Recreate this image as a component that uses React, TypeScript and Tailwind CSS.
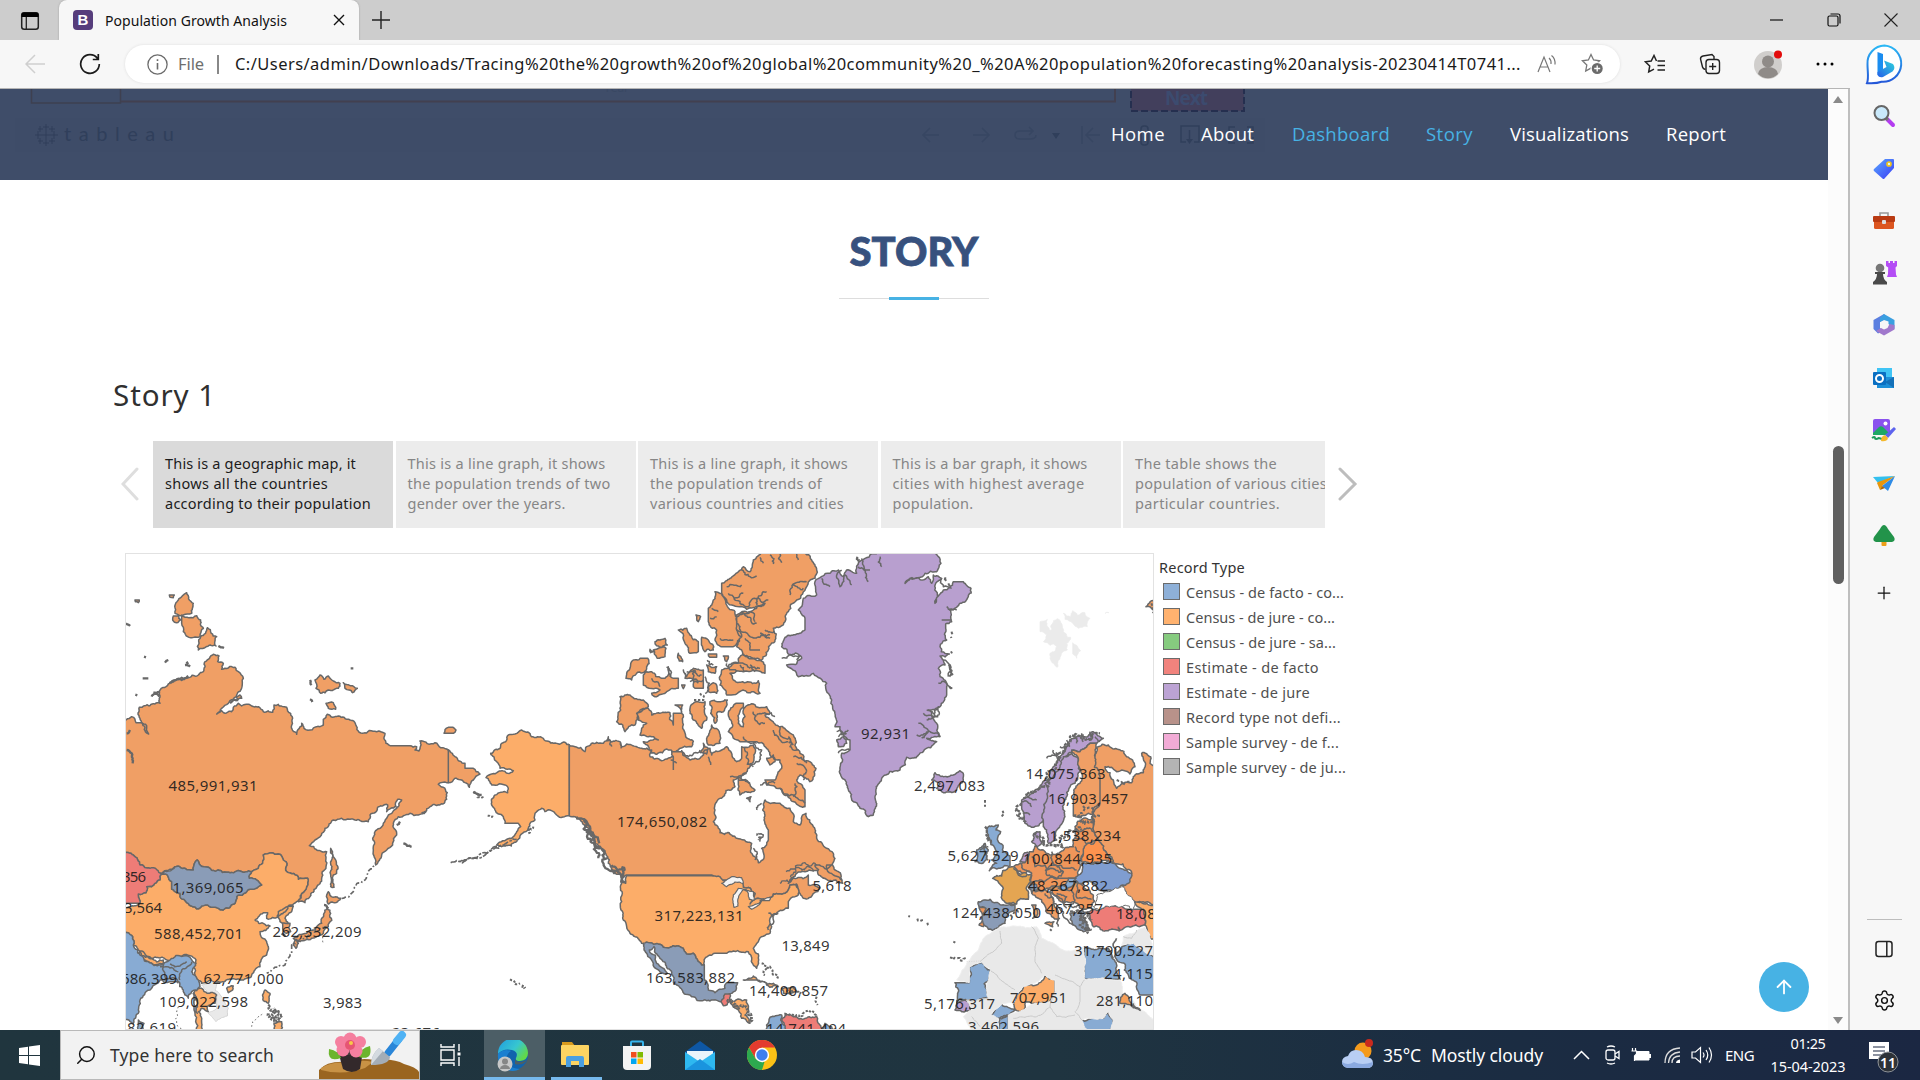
import React, { useLayoutEffect, useRef, useState } from "react";
import { Search, ArrowUp, Plus, Settings } from "lucide-react";

/* Text set to a given width by spreading its letters. */
function Fit({ w, className = "", children }: { w: number; className?: string; children: string }) {
  const ref = useRef<HTMLSpanElement>(null);
  const [ls, setLs] = useState(0);
  useLayoutEffect(() => {
    const el = ref.current;
    if (!el) return;
    el.style.letterSpacing = "0px";
    setLs((w - el.getBoundingClientRect().width) / children.length);
  }, [w, children]);
  return (
    <span ref={ref} style={{ letterSpacing: `${ls}px` }} className={"inline-block whitespace-nowrap " + className}>
      {children}
    </span>
  );
}

/* ---------- map geometry ---------- */
type P = [number, number];
const hash = (a: P, b: P) => {
  const v = Math.sin(a[0] * 12.9898 + a[1] * 78.233 + b[0] * 37.719 + b[1] * 4.581) * 43758.5453;
  return v - Math.floor(v);
};
function split(a: P, b: P, rough: number): P[] {
  const dx = b[0] - a[0];
  const dy = b[1] - a[1];
  const len = Math.hypot(dx, dy);
  if (len < 7 || dx === 0 || dy === 0) return [a];
  const flip = a[0] > b[0];
  const [p, q] = flip ? [b, a] : [a, b];
  const off = (hash(p, q) - 0.5) * rough;
  const m: P = [(p[0] + q[0]) / 2 - (q[1] - p[1]) * off, (p[1] + q[1]) / 2 + (q[0] - p[0]) * off];
  return [...split(a, m, rough), ...split(m, b, rough)];
}
function coast(points: string, rough: number, close = true) {
  const pts = points.trim().split(/\s+/).map((s) => s.split(",").map(Number) as P);
  const out: P[] = [];
  pts.forEach((p, i) => {
    if (i < pts.length - 1) out.push(...split(p, pts[i + 1], rough));
    else out.push(...(close ? split(p, pts[0], rough) : [p]));
  });
  return "M" + out.map((p) => p[0].toFixed(1) + " " + p[1].toFixed(1)).join("L") + (close ? "Z" : "");
}
function Land({ f, d, r = 0.4, w = 4.5, s = "#686868" }: { f: string; d: string[]; r?: number; w?: number; s?: string }) {
  return <path d={d.map((x) => coast(x, r)).join("")} fill={f} stroke={s} strokeWidth={w} strokeLinejoin="round" />;
}
function Lines({ d, w = 4.5, s = "#686868", r = 0.4, dash }: { d: string[]; w?: number; s?: string; r?: number; dash?: string }) {
  return <path d={d.map((x) => coast(x, r, false)).join("")} fill="none" stroke={s} strokeWidth={w} strokeDasharray={dash} strokeLinejoin="round" />;
}

const O = "#f09f65";
const LO = "#fcad69";
const BL = "#88abd3";
const SL = "#8a9cb7";
const RD = "#ee7c77";
const PU = "#b89fcf";
const GR = "#e9e9e9";

const labels: [string, number, number, number][] = [
  ["485,991,931", 168.5, 791, 89], ["1,369,065", 172.5, 893, 71], ["356", 122, 882, 24], ["3,564", 124, 913, 38],
  ["588,452,701", 154, 939, 89], ["262,332,209", 272.5, 937, 89], ["686,399", 121, 984, 56], ["62,771,000", 203.5, 984, 80],
  ["109,022,598", 159, 1007, 89], ["3,983", 323, 1008, 39], ["82,619", 127, 1033, 49], ["23,676", 392, 1038, 48],
  ["174,650,082", 617, 827, 90], ["317,223,131", 654.5, 921, 89], ["5,618", 812.5, 891, 39], ["13,849", 781.5, 951, 48],
  ["163,583,882", 646, 983, 89], ["14,400,857", 749, 996, 79], ["14,741,494", 766, 1034, 80], ["92,931", 861, 739, 49],
  ["2,497,083", 914, 791, 71], ["14,075,363", 1025.5, 779, 80], ["16,903,457", 1048, 804, 80], ["1,538,234", 1049.5, 841, 71],
  ["5,627,529", 947.5, 861, 71], ["100,844,935", 1023, 864, 89], ["48,267,882", 1028, 891, 80], ["124,438,050", 952, 918, 89],
  ["467,257", 1046, 914, 57], ["18,086,215", 1116, 919, 80], ["31,790,527", 1074, 956, 79], ["24,115,338", 1104, 979, 80],
  ["281,110", 1096, 1006, 57], ["707,951", 1010, 1003, 57], ["5,176,317", 924, 1009, 71], ["3,462,596", 968, 1032, 71],
];

function WorldMap() {
  return (
    <svg width="1029" height="477" viewBox="125 553 1029 477" className="block">
      <g transform="translate(120 550) scale(.33333)">
        <Land f={O} d={[
          "0,500 18,510 35,500 48,518 62,518 80,527 86,552 76,545 68,520 60,505 58,472 90,467 120,460 118,430 145,402 200,385 235,375 250,365 255,335 280,313 297,318 293,335 310,340 305,358 345,352 355,365 370,385 366,410 350,435 325,460 305,475 290,492 305,482 335,485 340,472 355,460 365,468 385,463 415,470 430,485 458,487 462,465 475,463 500,472 512,490 514,530 530,553 538,535 545,520 552,535 600,530 610,525 610,508 622,493 655,498 690,510 705,518 728,550 770,545 795,550 798,580 815,587 870,587 890,590 885,600 897,603 900,573 945,578 985,600 1035,640 1035,655 1060,655 1080,672 1060,690 1048,712 1035,698 1005,685 985,698 955,703 970,712 980,748 930,770 895,795 870,790 850,797 835,800 820,820 830,850 818,885 800,900 785,915 767,945 760,900 758,865 770,840 800,805 830,775 845,750 833,748 828,770 800,785 803,765 775,770 750,795 745,815 720,812 690,808 640,810 615,835 585,870 568,887 590,900 620,905 618,950 605,985 570,1040 555,1058 535,1055 545,1030 560,1010 563,985 535,988 500,965 490,930 475,912 455,908 430,915 428,940 415,955 395,965 360,963 320,967 270,955 232,930 222,945 220,960 195,955 165,950 125,970 90,955 60,945 40,915 0,880",
          "200,128 220,160 215,190 190,195 165,190 175,150", "185,195 230,197 242,210 240,260 222,262 190,245 185,220", "160,198 175,198 182,210 170,218 158,210",
          "262,233 290,260 288,288 235,300 242,260", "585,390 600,375 612,388 625,378 660,400 655,415 625,420 602,430 588,415", "670,398 712,415 698,428 675,415",
          "618,460 640,458 647,478 625,475", "972,550 985,532 1008,540 1000,550", "348,440 360,435 365,445 352,450", "45,150 58,150 55,158 46,155", "148,135 163,135 160,143 150,142",
          "632,895 640,920 650,970 640,975 642,1012 632,1010 636,950", "625,1025 662,1045 655,1052 625,1062 622,1045",
          "622,1075 632,1090 625,1130 610,1150 575,1165 540,1175 520,1165 560,1150 605,1120 612,1090", "525,1170 535,1180 528,1195 520,1185", "485,1115 510,1120 512,1145 500,1150 488,1135",
        ]} />
        <Land f={LO} d={[
          "125,972 155,995 155,1018 180,1030 200,1058 285,1072 345,1060 350,1040 380,1025 425,1005 388,985 395,965 415,955 428,940 430,915 455,908 475,912 490,930 500,965 535,988 563,985 560,1010 545,1030 530,1055 500,1080 475,1100 440,1105 443,1088 430,1088 405,1110 430,1120 450,1128 420,1145 440,1175 445,1190 440,1215 420,1250 395,1275 360,1290 300,1297 270,1290 245,1300 225,1275 228,1230 210,1217 190,1215 150,1232 100,1225 60,1205 40,1185 38,1160 0,1140 0,1078 58,1060 55,1032 78,1028 80,1010 105,1000",
          "60,1203 130,1230 130,1242 90,1238 55,1215", "320,1315 340,1308 335,1322 325,1328", "475,1085 520,1068 515,1085 495,1105 505,1120 480,1115",
          "435,1320 450,1330 445,1360 430,1352", "462,1420 485,1415 480,1450 455,1450",
        ]} />
        <Land f={GR} s="#d5d5d5" w={3} r={0.2} d={["245,1305 272,1294 292,1300 285,1320 325,1375 322,1398 288,1415 265,1390 290,1375 290,1335 262,1325"]} />
        <Land f={LO} d={["225,1310 245,1315 262,1330 290,1335 285,1360 262,1370 265,1385 245,1375 235,1385 245,1420 250,1450 230,1440 225,1390 230,1350"]} />
        <Land f={SL} d={["125,972 165,950 195,955 220,960 222,945 232,930 270,955 320,967 360,963 395,965 388,985 425,1005 380,1025 350,1040 345,1060 285,1072 200,1058 180,1030 155,1018 155,995"]} />
        <Land f={RD} d={["0,880 40,915 60,945 90,955 125,972 105,1000 80,1010 78,1028 55,1032 58,1060 0,1060"]} />
        <Land f={BL} d={[
          "0,1140 38,1160 40,1185 60,1215 95,1240 130,1245 150,1230 190,1218 210,1222 228,1240 215,1265 235,1290 240,1310 215,1325 205,1345 190,1320 175,1295 150,1295 120,1290 90,1320 60,1350 55,1390 40,1420 0,1400",
          "222,1330 228,1340 232,1390 222,1380", "55,1410 72,1420 68,1440 52,1440",
        ]} />
        <Lines d={["130,1245 135,1290 165,1285 175,1300", "150,1242 180,1248 200,1235", "180,1290 185,1260 215,1235", "985,598 985,700", "120,1250 160,1255 175,1265"]} />
        <Lines w={7} d={["95,440 120,425", "100,428 118,440", "150,400 205,378", "195,345 210,350", "570,390 575,405", "295,288 312,294", "18,220 30,228", "68,385 85,385", "135,338 145,330", "850,880 875,890", "1060,725 1085,735", "830,825 840,815", "905,790 918,785", "330,460 355,450", "20,600 35,610 38,640", "30,540 20,550", "485,1150 495,1160", "612,1065 625,1075", "692,355 700,355", "72,320 78,322", "46,434 52,436", "570,448 577,456", "200,335 205,342"]} />
        <Lines w={5} dash="14 7 5 6" d={["665,1045 700,1025 735,990 765,945", "620,1130 560,1165 515,1185 515,1210 495,1245 440,1270"]} />
        <Lines w={5} dash="20 5 8 4" d={["992,938 1060,925 1100,910 1145,885 1180,865"]} />
        <Lines w={9} dash="6 3" r={0.9} d={["450,1365 475,1385 480,1410 455,1400 460,1375", "445,1390 475,1400"]} />
        <Lines w={3} dash="5 7" d={["175,1370 170,1420 185,1440", "395,1430 430,1390", "608,1160 610,1180"]} />
      </g>

      <g transform="translate(460 550) scale(.33333)">
        <Land f={LO} d={["328,585 315,577 250,565 215,560 185,540 165,552 145,555 125,580 120,595 92,610 110,635 120,655 143,658 160,662 143,670 115,665 78,683 95,705 140,707 143,728 105,735 95,765 105,780 130,800 135,820 175,820 182,830 170,845 150,865 110,885 125,890 175,868 205,835 225,810 230,785 245,775 255,785 270,780 290,795 328,797"]} />
        <Land f={O} d={[
          "328,585 345,590 375,605 380,590 410,577 430,580 445,560 452,575 482,578 485,590 500,582 545,595 575,600 570,620 600,630 640,620 635,605 665,605 690,630 720,625 735,600 750,595 755,615 785,600 800,590 815,610 830,635 845,625 845,590 880,585 885,610 870,650 850,675 820,690 825,710 780,745 765,780 760,815 780,848 830,865 875,880 878,915 895,938 908,930 905,895 925,870 925,840 912,810 908,780 915,750 960,760 990,775 1000,815 1020,825 1038,790 1060,830 1070,865 1100,895 1120,910 1118,940 1060,962 1010,970 985,1000 1010,985 1045,975 1045,1005 1080,1012 1060,1030 1030,1045 1020,1030 1010,1003 990,1005 975,1030 940,1032 905,1048 870,1062 880,1050 885,1030 850,1012 845,990 790,990 755,975 500,975 485,985 460,965 445,940 430,905 400,870 375,830 345,800 328,797",
          "785,100 810,85 835,65 850,50 870,65 880,30 905,5 1020,5 1055,30 1070,60 1065,85 1040,110 1010,150 985,185 975,215 940,235 945,270 925,300 905,330 870,320 850,315 830,290 845,260 830,230 830,195 880,180 915,160 860,178 815,165 800,150 785,130",
          "765,125 785,130 800,165 825,185 830,220 840,230 845,260 820,290 785,290 765,270 770,240 745,215 745,175 760,150",
          "785,360 805,355 850,312 915,345 915,370 850,365 810,370 820,390 895,392 900,430 800,435 780,405", "740,345 770,350 765,370 745,365", "750,405 765,400 770,430 745,425",
          "550,375 575,365 605,385 615,385 625,350 640,385 655,385 655,415 620,425 590,440 575,430 600,420 550,405", "670,360 680,380 700,355 730,360 730,415 705,415 700,390 675,385",
          "500,370 540,325 563,325 560,355 530,370 515,390 498,385", "585,275 615,265 622,285 590,287", "580,300 618,295 615,320 592,325", "655,240 680,235 690,255 715,275 715,305 690,310 675,280",
          "725,262 745,270 760,300 735,305", "745,312 770,312 770,322 750,322", "790,318 805,318 800,335", "655,310 668,335 658,333", "708,195 722,200 715,215", "570,298 580,305 572,308", "665,405 675,405 670,416",
          "480,440 510,435 550,450 565,470 530,490 525,525 495,545 470,515 482,480",
          "530,490 565,475 575,495 630,488 640,525 640,490 665,490 668,535 700,575 695,590 655,600 590,613 550,575 595,570 580,560 540,555 545,535 560,520 535,510", "645,465 668,465 665,488",
          "690,490 700,460 735,455 740,510 725,535 700,510", "750,455 802,450 790,485 770,490 765,520 752,490", "755,525 775,540 780,580 745,585 742,560",
          "810,480 830,460 850,460 838,490 835,520 850,530 855,500 850,480 880,462 920,470 930,490 915,495 960,530 985,545 1015,600 1035,635 1068,655 1050,695 1020,675 1010,690 1035,720 1035,770 990,745 960,715 920,705 915,690 945,690 965,655 960,630 930,615 915,590 890,575 840,575 805,545 815,515",
          "835,680 850,690 885,720 855,725 840,735 835,705", "920,625 940,615 945,635 930,645", "860,745 873,740 870,755", "1100,945 1118,945 1125,960 1143,975 1145,992 1110,990 1090,985",
          "730,580 745,595 740,612 722,608",
        ]} />
        <Land f={LO} d={[
          "500,977 755,977 790,992 845,992 850,1012 885,1030 880,1050 870,1062 905,1048 940,1032 975,1030 990,1005 1010,1003 1015,1035 1005,1040 985,1055 985,1075 955,1085 930,1105 935,1130 930,1150 895,1175 880,1195 895,1235 890,1255 875,1230 865,1205 845,1207 820,1203 800,1210 765,1210 735,1225 733,1245 725,1245 700,1210 680,1212 650,1188 610,1192 570,1178 545,1180 525,1160 510,1150 490,1110 483,1080 487,1030 483,990 497,1000",
          "810,1355 860,1350 865,1375 855,1395 870,1420 845,1405 835,1380", "850,1290 880,1278 940,1300 955,1310 930,1312 890,1290", "965,1315 1000,1312 1010,1325 970,1330",
        ]} />
        <Land f="#f4f4f4" w={3.5} r={0.2} d={["785,1000 815,980 845,983 850,1000 825,996 800,1010", "822,1072 820,1035 835,1015 852,1018 838,1035 834,1068", "850,1018 880,1025 883,1050 868,1048 865,1030", "865,1070 905,1053 895,1066 875,1078", "900,1052 932,1042 928,1052"]} />
        <Land f={SL} d={["550,1180 570,1178 610,1192 650,1188 680,1212 700,1210 725,1245 733,1245 733,1290 745,1320 765,1328 795,1315 800,1298 833,1298 828,1320 800,1335 785,1355 760,1350 740,1352 690,1335 650,1305 640,1280 600,1225 582,1190 568,1200 590,1240 622,1270 605,1268 580,1240 560,1210"]} />
        <Land f={RD} d={["795,1332 810,1332 808,1355 790,1367 783,1355", "965,1410 975,1390 1000,1400 1070,1398 1080,1425 1090,1450 975,1450"]} />
        <Land f={BL} d={["915,1450 930,1402 965,1395 962,1410 978,1450", "1078,1450 1095,1420 1125,1450"]} />
        <Lines w={7} r={0.9} d={["350,800 380,820 385,850 405,875 430,900 440,925 490,975 495,995", "372,810 390,830 402,860 418,880", "400,895 415,925", "455,945 485,985", "390,840 420,895"]} />
        <Lines r={0.6} d={[
          "575,385 590,395 600,410", "620,350 630,380", "700,360 715,400", "680,365 725,375", "690,395 730,390", "640,620 640,660", "632,630 650,640", "665,600 685,620 720,600", "745,620 752,645",
          "900,22 910,40", "930,15 940,42", "960,12 965,38", "1010,12 1015,30", "845,60 870,80 890,78", "1040,95 990,135", "1000,105 1030,115", "805,130 860,170 925,150", "820,145 850,130", "890,165 920,125", "840,190 890,220", "830,200 870,185 885,215", "800,110 845,105",
          "755,175 775,185", "750,205 770,200", "780,265 820,270", "855,265 870,300 900,300", "830,240 930,255", "900,250 930,265", "915,240 945,245", "805,350 900,355", "800,340 830,365", "840,345 855,365", "870,345 885,365",
          "880,485 915,520", "890,495 945,500", "940,540 985,575", "960,530 965,560 1000,585", "985,560 990,590 1015,600", "1000,620 1040,640", "1010,640 1040,665", "1040,665 1030,690", "960,715 1000,735 1035,760", "880,580 905,600 870,640", "855,590 880,650", "810,680 860,670", "835,690 870,700", "850,560 890,580", "1005,700 1000,740", "440,570 455,590", "480,580 482,595", "735,380 748,400 735,430", "742,330 760,345", "890,780 905,760", "895,850 910,855 900,875", "880,895 885,930", "925,1090 940,1120 925,1140", "935,1100 955,1090", "900,705 945,700",
        ]} />
        <Lines w={6} dash="7 5" r={0.8} d={["905,1240 930,1250 940,1275 960,1285", "920,1255 915,1275", "1070,1340 1073,1365", "150,1288 180,1300", "978,1390 1010,1395 1070,1400", "1010,1325 1030,1327", "720,430 730,450 700,450", "205,850 220,830", "40,728 70,735", "83,797 98,795", "892,850 905,860 895,870"]} />
        <Lines w={9} dash="6 3" r={0.9} d={["800,1350 835,1375 865,1415", "980,1320 1000,1322", "185,1308 195,1315", "1190,25 1195,45"]} />
        <Lines w={5} dash="20 5 8 4" d={["0,935 40,925 80,910 125,885 170,868"]} />
      </g>

      <g transform="translate(780 550) scale(.33333)">
        <Land f={PU} d={[
          "105,95 150,70 175,60 190,80 200,60 230,70 255,25 300,5 455,5 483,40 470,65 435,70 390,85 375,100 405,85 445,80 455,100 460,75 485,85 465,160 490,120 520,95 550,95 573,115 565,140 540,160 530,172 508,178 512,200 515,215 497,222 497,235 500,270 480,290 484,305 508,312 480,318 495,345 475,355 480,380 500,410 500,435 480,470 445,480 470,520 480,560 440,565 470,575 430,605 380,622 360,660 305,685 285,740 280,795 265,800 240,775 215,750 195,690 180,660 185,610 210,600 210,570 180,530 165,530 155,450 140,400 100,370 55,380 20,345 65,325 62,318 5,290 20,260 75,240 75,205 55,180 70,145 110,135",
          "455,690 465,668 490,680 520,675 540,662 550,690 530,720 490,728 470,715 480,700",
          "735,820 725,770 725,750 760,730 780,715 800,690 820,650 835,620 860,590 890,560 940,545 970,565 950,580 930,580 900,605 880,600 850,620 840,650 820,680 795,700 800,750 790,810 755,832",
          "875,608 895,625 900,665 885,700 860,740 855,800 835,835 830,870 805,880 790,830 790,810 800,750 795,700 820,680 840,650 850,620",
          "762,850 780,845 785,880 770,890 755,875", "720,935 735,908 748,910 740,940", "170,570 190,560 200,580 175,590", "525,1380 530,1355 555,1350 572,1380 545,1385",
        ]} />
        <Land f="#ebebeb" s="#ebebeb" w={2} d={["780,215 802,208 808,240 816,238 820,212 832,206 842,215 850,245 862,262 872,262 860,280 862,300 845,310 840,325 832,352 824,345 810,310 830,290 820,282 812,286 790,275 800,255 780,245", "850,190 872,200 878,182 892,196 915,188 930,205 922,230 895,235 878,220 855,208", "878,278 893,290 902,302 890,325 878,312", "975,190 987,188"]} />
        <Land f={O} d={[
          "875,600 900,605 930,580 950,580 945,620 960,680 960,760 940,792 880,798 880,750 900,700 905,670 895,625",
          "945,620 950,592 985,585 1040,620 1065,650 1050,672 1010,665 975,650 1000,690 1010,715 1030,700 1055,698 1060,680 1090,668 1085,610 1112,620 1110,640 1140,660 1140,1080 1070,1060 1035,1045 1030,1010 1055,970 1050,960 1000,940 980,910 955,870 940,830 935,800 960,760 960,680",
          "1098,170 1130,150 1130,185", "755,1065 768,1065 770,1100 758,1105", "795,1120 822,1115 818,1130",
          "765,1020 790,1015 820,1050 835,1090 835,1110 815,1100 790,1060 755,1030", "105,945 118,945 160,975 188,1000 145,992",
        ]} />
        <Land f="#ef965a" d={[
          "700,955 720,940 735,938 748,905 760,905 765,888 790,900 810,915 870,890 880,890 890,860 885,830 910,805 940,808 940,830 955,870 900,935 895,980 940,1035 935,1070 900,1075 880,1055 850,1060 830,1040 800,1015 765,1025 750,1010 755,970",
          "598,1070 618,1075 610,1130 597,1125",
        ]} />
        <Land f="#fd934f" d={["905,935 910,900 930,880 955,870 980,910 1000,935 960,938"]} />
        <Land f="#e4a552" d={["638,985 665,978 668,962 695,950 755,975 740,1010 745,1048 715,1050 710,1062 668,1050 670,1015"]} />
        <Land f={BL} d={[
          "628,828 655,825 648,840 662,845 652,868 665,882 670,905 690,918 690,948 660,955 628,962 650,940 635,930 650,915 645,895 630,870 622,850", "585,935 590,900 615,880 625,900 618,930 600,940",
          "835,1015 865,985 890,985 880,1005 860,1020 845,1020",
          "525,1298 568,1298 570,1250 605,1237 632,1260 625,1345 560,1350 530,1352", "632,1395 665,1362 705,1380 690,1395 655,1405 640,1405", "658,1405 685,1395 685,1450 652,1450",
          "913,1190 985,1195 1010,1250 1020,1288 913,1288", "1020,1200 1060,1180 1120,1220 1140,1225 1140,1335 1080,1335 1045,1275 1005,1220", "905,1410 970,1405 985,1385 1000,1410 985,1450 930,1450",
        ]} />
        <Land f="#7f9dd0" d={["895,975 905,940 960,938 985,930 1020,955 1055,970 1050,995 1020,1010 1005,1030 985,1020 950,1015 935,995 885,990"]} />
        <Land f={SL} d={["595,1055 630,1048 705,1065 705,1080 685,1090 675,1120 655,1133 625,1138 612,1125 618,1075 597,1070", "870,1090 900,1082 925,1085 910,1100 930,1140 910,1145 880,1125", "745,1012 770,1005 775,1018 755,1028"]} />
        <Land f={RD} d={["925,1090 960,1078 1000,1068 1040,1078 1090,1078 1095,1125 1040,1130 1000,1138 940,1130 930,1110"]} />
        <Land f="#fff" w={3} d={["940,1070 950,1035 985,1025 1030,1010 1065,1060 1060,1080 1000,1068 955,1078"]} />
        <Land f={LO} d={["1065,1055 1100,1060 1140,1085 1140,1180 1110,1165 1095,1125 1090,1078", "707,1380 700,1360 730,1310 795,1275 825,1290 825,1325 810,1355 770,1360 740,1355 722,1385"]} />
        <Land f={GR} s="#efefef" w={3} r={0.2} d={[
          "640,1143 770,1130 785,1165 850,1200 910,1190 913,1288 1020,1290 1030,1335 1080,1375 1110,1400 1125,1410 1125,1450 985,1450 1000,1410 985,1385 970,1405 905,1410 930,1450 685,1450 685,1395 720,1385 770,1360 810,1355 825,1325 825,1290 795,1275 730,1310 700,1360 665,1362 632,1395 655,1405 652,1450 585,1450 550,1400 575,1380 560,1350 625,1345 632,1260 605,1237 568,1250 568,1298 530,1290 560,1240 595,1200 610,1165",
          "1030,1160 1095,1130 1110,1165 1130,1215 1060,1180 1025,1185",
        ]} />
        <Lines s="#c9c9c9" w={3} r={0.2} d={["660,1143 665,1180 600,1235", "755,1130 775,1165 765,1235 785,1270", "632,1262 705,1320", "825,1275 900,1310 913,1290", "900,1310 900,1355 885,1385 905,1410", "825,1325 810,1370 770,1400 700,1405", "575,1400 600,1430", "625,1345 560,1350", "810,1370 830,1400 885,1395", "1030,1160 1055,1165 1070,1140"]} />
        <Lines s="#cccccc" w={2} dash="3 4" r={0} d={["560,1235 600,1233"]} />
        <Land f="#f7a05a" d={["1020,1360 1035,1330 1050,1355 1080,1380 1060,1372"]} />
        <Lines w={5} d={["1060,1360 1082,1382", "1010,1165 1003,1220", "1015,1130 1018,1145", "985,1200 1000,1225"]} />
        <Lines r={0.5} d={[
          "755,920 765,950 795,945 800,960 850,965", "815,905 820,940 850,955 890,960", "795,960 820,945 850,965 830,985 800,975 795,960", "755,975 750,1005 790,995 835,985 890,985", "800,1015 830,1010 870,1022", "885,890 900,905", "885,840 940,845", "885,865 955,870", "830,1030 860,1040 855,1060", "870,1020 885,1050 870,1070", "895,1045 935,1048", "880,990 895,1045", "820,1010 810,1025 840,1045 860,1075", "865,1070 895,1065", "720,940 735,960 750,965", "700,955 740,975",
          "795,1030 820,1045 850,1085 880,1125", "690,1065 710,1060", "125,85 150,110", "185,60 180,110 195,75 215,105", "235,50 265,95", "245,25 255,60 270,60", "300,20 305,50", "485,85 490,110 515,115", "500,170 530,180", "485,210 515,210", "490,330 510,345 505,380", "475,400 515,415", "440,480 470,500 475,470 440,510", "430,490 475,500", "415,520 450,545 480,560", "410,555 445,545 425,565", "170,545 200,550", "175,560 205,540", "175,610 210,600", "5,325 60,318 50,330",
          "860,570 870,590", "880,555 890,580", "905,550 910,575", "930,545 935,570", "820,600 840,630", "800,625 835,615", "840,590 870,585", "725,755 755,770", "728,790 750,795", "740,740 770,750", "945,560 960,575", "600,900 625,890", "615,880 625,930", "840,1105 830,1120 835,1130",
        ]} />
        <Lines w={7} r={0.9} dash="9 3" d={["730,745 780,710 815,660 830,610 860,580 900,555 960,550", "615,830 620,870 635,885", "725,760 740,820", "870,1085 905,1090 900,1110 925,1150", "905,1135 935,1140", "900,1100 915,1120 895,1125", "762,855 790,885", "790,870 815,885 860,860 905,840", "880,798 945,795", "925,1085 935,1110"]} />
        <Lines w={6} r={0.8} d={["515,245 518,252", "513,260 514,264", "513,304 516,310", "497,82 499,92", "505,100 510,108", "508,410 517,414", "505,345 508,380"]} />
        <Lines w={6} dash="8 6" r={0.8} d={["510,1222 530,1225 555,1220", "385,1098 390,1100", "412,1106 430,1110", "442,1118 448,1128", "615,750 615,770", "668,782 665,800", "1010,690 1030,705 1050,695", "520,1175 526,1178", "690,1095 720,1085", "810,1138 815,1142", "232,20 236,30", "1115,160 1118,190", "900,790 960,798"]} />
        <Lines w={4} r={0.7} d={["18,965 60,955 100,965", "0,1000 40,970 110,945"]} />
      </g>

      {labels.map(([t, x, y, w]) => (
        <text key={t} x={x} y={y} textLength={w} lengthAdjust="spacing" fontSize="15" fill="#1a1a1a" fillOpacity=".9" className="font-['Noto_Sans',sans-serif]">
          {t}
        </text>
      ))}
    </svg>
  );
}

/* ---------- browser chrome ---------- */
function TabStrip() {
  return (
    <div className="flex h-10 shrink-0 items-stretch bg-[#cdcdcd]">
      <div className="flex w-[59px] items-center justify-center">
        <svg width="20" height="20" viewBox="0 0 20 20" className="mt-0.5">
          <rect x="1.7" y="1.7" width="16.6" height="16.6" rx="2.5" fill="none" stroke="#222" strokeWidth="1.5" />
          <path d="M1.5 3.5q0-2 2-2h13q2 0 2 2V6h-17z" fill="#000" />
          <path d="M6.3 6v12" stroke="#222" strokeWidth="1.3" />
        </svg>
      </div>
      <div className="flex w-[300px] items-center rounded-t-lg bg-[#f7f7f7] pl-3.5 shadow-[0_0_2px_#999]">
        <div className="flex size-5 items-center justify-center rounded bg-[#563d7c] font-['Liberation_Sans',sans-serif] text-[15px] font-bold text-white">B</div>
        <Fit w={182} className="ml-3 font-['Noto_Sans',sans-serif] text-[14px] text-[#111]">Population Growth Analysis</Fit>
        <svg width="12" height="12" viewBox="0 0 12 12" className="ml-[46px]"><path d="M1 1l10 10M11 1L1 11" stroke="#111" strokeWidth="1.4" /></svg>
      </div>
      <div className="flex flex-1 items-center pl-[13px]">
        <svg width="18" height="18" viewBox="0 0 18 18"><path d="M9 0v18M0 9h18" stroke="#222" strokeWidth="1.4" /></svg>
      </div>
      <div className="flex w-[175px] items-center justify-between pr-[22px] pl-[25px]">
        <svg width="13" height="12" viewBox="0 0 13 12"><path d="M0 6h13" stroke="#111" strokeWidth="1.2" /></svg>
        <svg width="14" height="14" viewBox="0 0 14 14" fill="none" stroke="#111" strokeWidth="1.2"><rect x="1" y="3" width="10" height="10" rx="1.5" /><path d="M3.5 1H11q2 0 2 2v7.500" /></svg>
        <svg width="14" height="14" viewBox="0 0 14 14"><path d="M.5.5l13 13M13.500.5l-13 13" stroke="#222" strokeWidth="1.1" /></svg>
      </div>
    </div>
  );
}

const STAR = "M10 1.500l2.600 5.500 6 .8-4.400 4.200 1.100 6L10 15.100 4.700 18l1.100-6L1.400 7.800l6-.8z";

function Toolbar() {
  return (
    <div className="flex h-12 w-full shrink-0 items-center bg-[#f7f7f7]">
      <svg width="20" height="20" viewBox="0 0 20 20" className="ml-[25px]" fill="none" stroke="#cfcfcf" strokeWidth="1.5"><path d="M20 10H1M10 1L1 10l9 9" /></svg>
      <svg width="22" height="22" viewBox="0 0 22 22" className="ml-[34px]" fill="none" stroke="#1b1b1b" strokeWidth="1.700"><path d="M18.500 5.500A9.300 9.300 0 1 0 20.300 11M19.300 1v5.500h-5.500" /></svg>
      <div className="ml-6 flex h-[38px] w-[1495px] items-center rounded-full bg-white shadow-[0_0_3px_#ddd]">
        <svg width="21" height="21" viewBox="0 0 21 21" className="ml-[22px]" fill="none" stroke="#6b6b6b" strokeWidth="1.300"><circle cx="10.500" cy="10.500" r="9.600" /><path d="M10.500 9v6.500M10.500 5.300v1.600" strokeWidth="1.600" /></svg>
        <Fit w={26} className="ml-2.5 font-['Noto_Sans',sans-serif] text-[16.500px] text-[#6e6e6e]">File</Fit>
        <div className="ml-[13px] h-[19px] w-0.5 bg-[#888]" />
        <Fit w={1286} className="ml-4 font-['Noto_Sans',sans-serif] text-[16.500px] text-[#1a1a1a]">
          C:/Users/admin/Downloads/Tracing%20the%20growth%20of%20global%20community%20_%20A%20population%20forecasting%20analysis-20230414T0741...
        </Fit>
        <svg width="20" height="20" viewBox="0 0 20 20" className="ml-4" fill="none" stroke="#777" strokeWidth="1.200"><path d="M1 18L7 3l6 15M3 13h8M12 4q2.500 2 2 6M14.500 1.500q4 3 3.500 9" /></svg>
        <svg width="24" height="24" viewBox="0 0 24 24" className="ml-6"><path d={STAR} transform="translate(0 1)" fill="none" stroke="#777" strokeWidth="1.300" /><circle cx="16" cy="16.500" r="6.500" fill="#fff" /><circle cx="16.200" cy="16.500" r="5.500" fill="#6b6b6b" /><path d="M16.200 13.500v6M13.200 16.500h6" stroke="#fff" strokeWidth="1.300" /></svg>
      </div>
      <svg width="22" height="20" viewBox="0 0 22 20" className="ml-[24px]" fill="none" stroke="#222" strokeWidth="1.500"><path d="M12.500 7L10 1.500 7.200 7 1.300 7.800l4.400 4.200-1 6L10 15.200M13.500 7H21M13.500 11.500H21M13.500 16H21" /></svg>
      <svg width="22" height="22" viewBox="0 0 22 22" className="ml-[33px]" fill="none" stroke="#222" strokeWidth="1.400"><rect x="7" y="6.500" width="13.500" height="14" rx="3" /><path d="M13.700 10v7M10.200 13.500h7M15 6V3.500L13 1.500 4 3Q1.500 3.500 1.500 6L3.500 14q.5 2 3 2.500" /></svg>
      <svg width="29" height="29" viewBox="0 0 29 29" className="ml-[33px]"><circle cx="14" cy="15" r="14" fill="#d0cecc" /><circle cx="14" cy="11.500" r="6" fill="#8f8b88" /><path d="M4 24a10 7 0 0 1 20 0 14 14 0 0 1-20 0" fill="#8f8b88" /><circle cx="24" cy="4.500" r="4" fill="#e30b0b" /></svg>
      <svg width="18" height="4" viewBox="0 0 18 4" className="ml-[33px]"><circle cx="2" cy="2" r="1.500" /><circle cx="9" cy="2" r="1.500" /><circle cx="16" cy="2" r="1.500" /></svg>
    </div>
  );
}

function Sidebar() {
  return (
    <aside className="flex w-[70px] shrink-0 flex-col items-center bg-[#f7f7f7] pr-0.5">
      <svg width="42" height="42" viewBox="0 0 42 42" className="mt-[3px]">
        <defs>
          <linearGradient id="bg1" x1="0" y1="0" x2="0" y2="1"><stop offset="0" stopColor="#2bb8f5" /><stop offset="1" stopColor="#2456d8" /></linearGradient>
          <linearGradient id="bg2" x1="0" y1="1" x2="1" y2="0"><stop offset="0" stopColor="#2560e8" /><stop offset="1" stopColor="#2fd3dd" /></linearGradient>
        </defs>
        <path d="M21.500 2.500a18 18 0 1 1-3 36.300c-5 2-9 1.700-14.500 1.400 2-5 .5-11 .5-19A17.500 17.500 0 0 1 21.500 2.500z" fill="#fff" stroke="url(#bg1)" strokeWidth="2" />
        <path d="M14.500 9l5.500 2v17l-5.500 4z" fill="#1b8df0" />
        <path d="M14.500 32v-3l9-5-2.500-6.500 9 3.500q3 4-.5 7.500L20 34q-4 1-5.500-2z" fill="url(#bg2)" />
      </svg>
      <div className="mt-[15px] flex flex-col items-center">
        <div className="flex h-[53px] items-start">
          <svg width="24" height="24" viewBox="0 0 24 24" className="mt-1"><path d="M14 14l7 7" stroke="#b43cf0" strokeWidth="4" strokeLinecap="round" /><path d="M13 13l3 3" stroke="#777" strokeWidth="3" /><circle cx="9.500" cy="9" r="7" fill="#c9e9fb" stroke="#666" strokeWidth="2" /></svg>
        </div>
        <div className="flex h-[52px] items-start">
          <svg width="24" height="24" viewBox="0 0 24 24" className="mt-1"><defs><linearGradient id="tg" x1="0" y1="0" x2="1" y2="1"><stop offset="0" stopColor="#5aa8ff" /><stop offset="1" stopColor="#3b3df5" /></linearGradient></defs><path d="M13 2h8q1 0 1 1v8L12.500 21.500q-1 1-2 0L2 14q-1-1 0-2z" fill="url(#tg)" /><circle cx="17" cy="7" r="2" fill="#dff" stroke="#f2c41c" strokeWidth="1.700" /></svg>
        </div>
        <div className="flex h-[52px] items-start">
          <svg width="24" height="24" viewBox="0 0 24 24" className="mt-1"><path d="M8 8V4h8v4" fill="none" stroke="#999" strokeWidth="1.600" /><rect x="2" y="11" width="20" height="9" rx="1.500" fill="#dc551f" /><rect x="1" y="7" width="22" height="6" rx="1" fill="#b93a12" /><rect x="10" y="11" width="4" height="4" rx="1" fill="#ddd" /></svg>
        </div>
        <div className="flex h-[52px] items-start">
          <svg width="26" height="26" viewBox="0 0 26 26" className="mt-[3px]"><path d="M15 1h2.500v2H19V1h3v2h1.500V1H26v5l-1.500 1.500.5 7 1 2.500H16l1-3 .2-6.500L15 6z" fill="#b44df5" /><circle cx="9" cy="8" r="4.300" fill="#777" /><path d="M4 12h10v2h-2q0 5 4 8v2.500H2V22q4-3 4-8H4z" fill="#4a4a4a" /></svg>
        </div>
        <div className="flex h-[53px] items-start">
          <svg width="24" height="24" viewBox="0 0 24 24" className="mt-1"><path d="M12 1L1.500 7v9L6 20.500l5-2.500-3-3V9l7-4z" fill="#5b7fe0" /><path d="M12 1l10.500 6v9l-6-5V8.500L12 7 8 9V5z" fill="#3a9fe0" /><path d="M4 18l8 4.500L22.500 16.500V12l-5-1-2 4L12 16.500l-3-1.500z" fill="#a078cc" /></svg>
        </div>
        <div className="flex h-[52px] items-start">
          <svg width="24" height="24" viewBox="0 0 24 24" className="mt-1"><path d="M5 2h15v11H5z" fill="#3fc4f5" /><path d="M5 11l17 0v11H5z" fill="#1d8fd8" /><path d="M22 11v11l-9-6z" fill="#1470b8" /><rect x="1" y="6" width="13" height="13" rx="1" fill="#0a6fc2" /><circle cx="7.500" cy="12.500" r="3.500" fill="none" stroke="#fff" strokeWidth="2" /></svg>
        </div>
        <div className="flex h-[53px] items-start">
          <svg width="26" height="26" viewBox="0 0 26 26" className="mt-1"><rect x="2" y="1" width="17" height="16" rx="2" fill="#8a52ee" /><circle cx="14.500" cy="5.500" r="2" fill="#fff" /><path d="M2 15l6-6q2-1.500 4 0l6 6v2H2z" fill="#1ea765" /><path d="M1 20q3-2 3 0t4 0l3 1" fill="none" stroke="#1b9a5a" strokeWidth="2" /><path d="M14 17L23 9l2 2-8 9z" fill="#5d63ee" /><path d="M10 23q0-5 4-6l3 3q-1 4-7 3z" fill="#f4b92c" /></svg>
        </div>
        <div className="flex h-[52px] items-start">
          <svg width="24" height="24" viewBox="0 0 24 24" className="mt-[5px]"><path d="M1 5l22-1L6 11z" fill="#34c0ee" /><path d="M23 4L6 10l-1 1 3 7 3-5z" fill="#e8960c" /><path d="M23 4l-7 15-6-5z" fill="#2f8be6" /><path d="M8 18l2-4 3 2z" fill="#a8640a" /></svg>
        </div>
        <div className="flex h-[52px] items-start">
          <svg width="24" height="24" viewBox="0 0 24 24" className="mt-[5px]"><rect x="9.500" y="15" width="5" height="7" rx="1" fill="#eda019" /><path d="M12 1q2 0 4 4l6 8q2 4-2 5H4q-4-1-2-5l6-8q2-4 4-4z" fill="#22934a" /></svg>
        </div>
        <Plus size={20} strokeWidth={1.500} className="mt-3" color="#111" />
      </div>
      <div className="flex-1" />
      <div className="h-px w-[35px] bg-[#bdbdbd]" />
      <svg width="18" height="18" viewBox="0 0 18 18" className="mt-[20px]" fill="none" stroke="#222" strokeWidth="1.500"><rect x="1" y="1.500" width="16" height="15" rx="2.500" /><path d="M11.800 1.500v15" /></svg>
      <Settings size={23} strokeWidth={1.500} className="mt-[31px] mb-[18px]" color="#111" />
    </aside>
  );
}

/* ---------- page ---------- */
function NavBar() {
  const link = "font-['Open_Sans',sans-serif] text-[18.500px] font-medium";
  return (
    <nav className="relative h-[91px] w-full shrink-0 overflow-hidden bg-[#3f4d69]">
      <svg width="1828" height="91" viewBox="0 89 1828 91" className="absolute inset-0" fill="none" stroke="#303f5b" strokeWidth="1.500">
        <rect x="15" y="118" width="1250" height="34" fill="#3e4c68" stroke="none" />
        <path d="M31.500 89v14h89V89" stroke="#3e4050" strokeWidth="1.500" />
        <path d="M121 101.500h994V89" stroke="#424050" strokeWidth="2" />
        <rect x="1131" y="80" width="113" height="31" fill="#423f5c" stroke="#252f4f" strokeWidth="2" strokeDasharray="7 3" />
        <path d="M46 130v10M41 135h10M46 124v6M43 127h6M46 140v6M43 143h6M38 131v8M35 135h6M54 131v8M51 135h7M40 126v6M38 129h5M52 126v6M49 129h6M40 138v6M38 141h5M52 138v6M49 141h6" strokeWidth="1" />
        <path d="M939 135h-16m7-7l-7 7 7 7M973 135h16m-7-7l7 7-7 7M1032 131h-12q-5 0-5 4t5 4h10q6 0 6-4M1029 127l4 4-4 4M1082 126v18M1100 135h-14m7-7l-7 7 7 7" stroke="#374662" />
        <path d="M1052 133h8l-4 6zM1186 139h7l-3.500 5z" fill="#303f5b" stroke="none" />
        <rect x="1141" y="126" width="7" height="19" rx="3" />
        <path d="M1186 142h-5v-16h18v16h-5M1189.500 130v10M1229 133v-6h6M1253 133v-6h-6M1229 137v6h6M1253 137v6h-6" />
        <text x="1165" y="105" fontSize="19" fontWeight="700" fill="#3c4b6f" stroke="none" textLength="43" className="font-['Open_Sans',sans-serif]">Next</text>
        <text x="604" y="92" fontSize="12" fill="#394863" stroke="none" className="font-['Open_Sans',sans-serif]">Year</text>
        <text x="64" y="141" fontSize="20" fill="#303f5b" stroke="none" textLength="110" className="font-['Lato',sans-serif]">tableau</text>
      </svg>
      <div className="relative flex h-[90px] items-center pl-[1111px] text-white">
        <Fit w={54} className={link}>Home</Fit>
        <Fit w={53} className={link + " ml-[36px]"}>About</Fit>
        <Fit w={98} className={link + " ml-[38px] text-[#47b2e4]"}>Dashboard</Fit>
        <Fit w={47} className={link + " ml-[36px] text-[#47b2e4]"}>Story</Fit>
        <Fit w={119} className={link + " ml-[37px]"}>Visualizations</Fit>
        <Fit w={60} className={link + " ml-[37px]"}>Report</Fit>
      </div>
    </nav>
  );
}

const points: [string, number][][] = [
  [["This is a geographic map, it", 191], ["shows all the countries", 163], ["according to their population", 206]],
  [["This is a line graph, it shows", 198], ["the population trends of two", 203], ["gender over the years.", 158]],
  [["This is a line graph, it shows", 198], ["the population trends of", 172], ["various countries and cities", 194]],
  [["This is a bar graph, it shows", 195], ["cities with highest average", 192], ["population.", 81]],
  [["The table shows the", 142], ["population of various cities", 192], ["particular countries.", 145]],
];

const legend: [string, string, number][] = [
  ["Census - de facto - co...", "bg-[#8eb0d8]", 158], ["Census - de jure - co...", "bg-[#ffb26f]", 149], ["Census - de jure - sa...", "bg-[#86cb7f]", 150],
  ["Estimate - de facto", "bg-[#f1837d]", 133], ["Estimate - de jure", "bg-[#bca3d4]", 124], ["Record type not defi...", "bg-[#b8928a]", 155],
  ["Sample survey - de f...", "bg-[#f2abd6]", 153], ["Sample survey - de ju...", "bg-[#b4b4b4]", 160],
];

function StoryPage() {
  return (
    <div className="relative flex min-w-0 flex-1 flex-col overflow-hidden bg-white">
      <NavBar />
      <div className="flex flex-col items-center pt-[41px]">
        <Fit w={129} className="font-['Lato',sans-serif] text-[40px] leading-[60px] font-black text-[#37517e] [-webkit-text-stroke:0.8px_#37517e]">STORY</Fit>
        <div className="mt-[16px] flex h-[3px] w-[150px] items-center justify-center bg-[linear-gradient(#ddd,#ddd)] bg-[length:100%_1px] bg-center bg-no-repeat">
          <div className="h-[3px] w-[50px] bg-[#47b2e4]" />
        </div>
      </div>
      <div className="mt-[75px] flex h-10 items-center pl-[113px]">
        <Fit w={103} className="font-['Noto_Sans',sans-serif] text-[29.500px] text-[#303030]">Story 1</Fit>
      </div>
      <div className="mt-[26px] flex h-[87px] items-center">
        <svg width="18" height="34" viewBox="0 0 18 34" className="-mt-0.5 ml-[121px]" fill="none" stroke="#dedede" strokeWidth="3" strokeLinecap="round"><path d="M16 2L2 17l14 15" /></svg>
        <div className="ml-[14px] flex w-[1172px] gap-[2.500px] overflow-hidden">
          {points.map((p, i) => (
            <div key={i} className={"flex h-[87px] w-[240px] shrink-0 flex-col pt-[12px] pl-3 font-['Noto_Sans',sans-serif] text-[14.500px] leading-5 " + (i === 0 ? "bg-[#dadada] text-[#1c1c1c]" : "bg-[#ececec] text-[#868686]")}>
              {p.map(([t, w]) => <div key={t} className="h-5"><Fit w={w}>{t}</Fit></div>)}
            </div>
          ))}
        </div>
        <svg width="20" height="34" viewBox="0 0 20 34" className="-mt-0.5 ml-[13px]" fill="none" stroke="#bdbdbd" strokeWidth="3" strokeLinecap="round"><path d="M2 2l15 15L2 32" /></svg>
      </div>
      <div className="mt-[25px] flex">
        <div className="ml-[125px] h-[477px] w-[1029px] shrink-0 overflow-hidden border border-[#e2e2e2]">
          <div className="-mt-px -ml-px"><WorldMap /></div>
        </div>
        <div className="ml-[5px] flex flex-col pt-[4px] font-['Noto_Sans',sans-serif] text-[14.500px] text-[#333]">
          <div className="h-[22px] leading-5"><Fit w={86}>Record Type</Fit></div>
          {legend.map(([t, c, w]) => (
            <div key={t} className="flex h-[25px] items-center pl-1">
              <div className={"size-[17px] border border-[#6b6b6b] " + c} />
              <Fit w={w} className="ml-[6px] leading-5 text-[#505050]">{t}</Fit>
            </div>
          ))}
        </div>
      </div>
      <button className="absolute right-[19px] bottom-[18px] flex size-[50px] items-center justify-center rounded-full bg-[#47b2e4]">
        <ArrowUp size={22} color="#fff" strokeWidth={2} />
      </button>
    </div>
  );
}

function ScrollBar() {
  return (
    <div className="flex w-[22px] shrink-0 flex-col items-center border-r-2 border-[#bfbfbf] bg-[#fcfcfc]">
      <svg width="10" height="7" viewBox="0 0 10 7" className="mt-[7px]"><path d="M5 0l5 7H0z" fill="#8a8a8a" /></svg>
      <div className="mt-[343px] h-[138px] w-[11px] rounded-full bg-[#606060]" />
      <div className="flex-1" />
      <svg width="10" height="7" viewBox="0 0 10 7" className="mb-[6px]"><path d="M5 7l5-7H0z" fill="#8a8a8a" /></svg>
    </div>
  );
}

/* ---------- taskbar ---------- */
function Taskbar() {
  const t = "font-['Noto_Sans',sans-serif] text-white";
  return (
    <footer className="flex h-[50px] shrink-0 items-center bg-[linear-gradient(90deg,#20353e_0%,#1f3440_55%,#1b2d42_75%,#1b2742_100%)]">
      <svg width="21" height="21" viewBox="0 0 21 21" className="ml-[19px]"><path d="M0 3l9-1.300V10H0zM10 1.500L21 0v10H10zM0 11h9v8.300L0 18zM10 11h11v10l-11-1.500z" fill="#fff" /></svg>
      <div className="ml-5 flex h-[50px] w-[360px] items-center border border-[#b9b9b9] bg-[#f2f2f2]">
        <Search size={22} strokeWidth={1.600} className="ml-3.5 -scale-x-100" color="#111" />
        <Fit w={164} className="ml-[13px] font-['Noto_Sans',sans-serif] text-[17.500px] text-[#333]">Type here to search</Fit>
        <svg width="100" height="48" viewBox="0 0 100 48" className="ml-auto">
          <path d="M0 48V39q8-10 30-8 12-5 25-2 20-2 30 4 12 3 15 8v7z" fill="#9a6520" />
          <path d="M2 37q12-7 28-5 12-4 24-1l-8 6q-22 8-44 2z" fill="#c89245" />
          <path d="M19 20h25l-3 18q-8 6-17 0z" fill="#33292b" /><rect x="18" y="19" width="27" height="5" rx="2" fill="#473b3c" />
          <path d="M22 27Q8 32 10 18q10 2 12 9zM40 26Q54 30 51 15q-10 2-11 11z" fill="#6cb52d" />
          <g fill="#f57f9f"><circle cx="31" cy="8" r="6.500" /><circle cx="22" cy="11" r="6" /><circle cx="41" cy="11" r="6" /><circle cx="24" cy="19" r="6.500" /><circle cx="37" cy="20" r="6.500" /></g>
          <circle cx="31" cy="14" r="5" fill="#e65573" /><circle cx="32" cy="12" r="2" fill="#f8c849" />
          <path d="M69 22L80 8" stroke="#2a86d8" strokeWidth="7" strokeLinecap="round" /><path d="M78 10l5-6" stroke="#4fb2f4" strokeWidth="8" strokeLinecap="round" />
          <path d="M60 17l11 9q-1 8-19 8 0-10 8-17z" fill="#a4adb6" /><path d="M60 17l4 3-12 14q0-10 8-17z" fill="#d4dae0" />
        </svg>
      </div>
      <svg width="22" height="22" viewBox="0 0 22 22" className="ml-[20px]" fill="none" stroke="#fff" strokeWidth="1.400"><path d="M1 0v3h13V0M1 22v-3h13v3M1 6h13v10H1zM19 0v7M19 13v9" /><path d="M17.500 8.500h3v3h-3z" fill="#fff" stroke="none" /></svg>
      <div className="ml-[22px] flex h-[50px] w-[61px] flex-col items-center bg-[#4c5e66]">
        <svg width="32" height="32" viewBox="0 0 32 32" className="mt-2.5 -ml-1">
          <defs><linearGradient id="ed" x1="0" y1="0" x2="1" y2=".6"><stop offset="0" stopColor="#1f9ce0" /><stop offset=".6" stopColor="#37c6d0" /><stop offset="1" stopColor="#62d949" /></linearGradient></defs>
          <circle cx="16" cy="15" r="15" fill="#1163ad" />
          <path d="M1 14A15 15 0 0 1 31 13q0 7-8 8-5 0-4-3 3-6-4-8-9-2-14 4z" fill="url(#ed)" />
          <path d="M1 14q6-6 13-3-6 4-4 11 3 7 13 7a15 15 0 0 1-22-15z" fill="#1b7fd0" />
          <path d="M18 18q0 4 6 4l6-2q-4 6-12 4z" fill="#4c5e66" />
          <circle cx="8" cy="24" r="7.500" fill="#c8c8c8" /><circle cx="8" cy="21.500" r="3" fill="#868686" /><path d="M3 29a5 4 0 0 1 10 0z" fill="#868686" />
        </svg>
        <div className="mt-auto h-[3px] w-full bg-[#76b9ed]" />
      </div>
      <div className="ml-1.5 flex h-[50px] w-[51px] flex-col items-center">
        <svg width="28" height="26" viewBox="0 0 28 26" className="mt-[12px] -ml-1"><path d="M1 0h10l3 4H1z" fill="#d79a1e" /><rect x="0" y="3" width="28" height="20" rx="1" fill="#fcd462" /><path d="M5 25v-9q0-2 2-2h14q2 0 2 2v9h-5v-6h-8v6z" fill="#4a9fe0" /></svg>
        <div className="mt-auto h-[3px] w-full bg-[#76b9ed]" />
      </div>
      <svg width="30" height="30" viewBox="0 0 30 30" className="ml-[20px]"><path d="M9 8V2.500q0-1 1-1h10q1 0 1 1V8" fill="none" stroke="#36b4ec" strokeWidth="2" /><path d="M1 6h28v20q0 4-4 4H5q-4 0-4-4z" fill="#f3f3f3" /><path d="M9 12h5.500v5.500H9z" fill="#f04e1f" /><path d="M15.500 12H21v5.500h-5.500z" fill="#80bb01" /><path d="M9 18.500h5.500V24H9z" fill="#01a6f0" /><path d="M15.500 18.500H21V24h-5.500z" fill="#ffba02" /></svg>
      <svg width="30" height="29" viewBox="0 0 30 29" className="ml-[33px]"><path d="M0 11L15 0l15 11v5H0z" fill="#0e57a4" /><path d="M2 10h26v10H2z" fill="#eaf4fb" /><path d="M0 11l15 10 15-10v18H0z" fill="#2eb8f0" /><path d="M0 29l15-11 15 11z" fill="#1a94de" /></svg>
      <svg width="30" height="30" viewBox="0 0 30 30" className="ml-[32px]"><circle cx="15" cy="15" r="15" fill="#fbc116" /><path d="M2 7.500A15 15 0 0 1 28 7.500H15L8.500 18.700z" fill="#e33b2e" /><path d="M2 7.500l6.500 11.200 9 3.300L15 30A15 15 0 0 1 2 7.500z" fill="#2da94f" /><circle cx="15" cy="15" r="7.200" fill="#fff" /><circle cx="15" cy="15" r="5.700" fill="#3f7fee" /></svg>
      <div className="flex-1" />
      <svg width="31" height="31" viewBox="0 0 31 31" className="mt-[-1px]"><circle cx="21" cy="12" r="8.500" fill="#f49a1c" /><circle cx="27" cy="4" r="4" fill="#c92a1e" /><path d="M6 29q-6-1-6-6 0-5 6-6 2-6 8-6 7 0 9 7 8 0 8 6 0 5-6 5z" fill="#b8cef4" /><path d="M6 29q-6-1-6-6 6 4 12 0 8 4 19 0 0 6-6 6z" fill="#8aa9e0" /></svg>
      <Fit w={38} className={t + " ml-2.5 text-[17.500px]"}>35°C</Fit>
      <Fit w={112} className={t + " ml-[10px] text-[17.500px]"}>Mostly cloudy</Fit>
      <svg width="17" height="10" viewBox="0 0 17 10" className="ml-[30px]" fill="none" stroke="#fff" strokeWidth="1.500"><path d="M1 9l7.500-7.500L16 9" /></svg>
      <svg width="15" height="20" viewBox="0 0 15 20" className="ml-[15px]" fill="none" stroke="#fff" strokeWidth="1.300"><rect x="1" y="5" width="9" height="10" rx="2" /><path d="M10 9l4-2.500v7L10 11M2 2q4-2 8 0M2 18q4 2 8 0" /></svg>
      <svg width="20" height="14" viewBox="0 0 20 14" className="ml-[11px]"><path d="M3.500 3.500H18V12H3.500z" fill="#fff" stroke="#fff" /><path d="M19 6v4" stroke="#fff" strokeWidth="2" /><path d="M.5 3h5v3l-2 2v5M1.500 0v3M4.500 0v3" stroke="#fff" strokeWidth="1.200" fill="#1b2b42" /></svg>
      <svg width="17" height="17" viewBox="0 0 17 17" className="ml-[13px]" fill="none" stroke="#ddd" strokeWidth="1.300"><path d="M1 16Q1 2 16 1M4.500 16Q5 6 16 5M8 16q0-7 8-7" /><path d="M12 16q0-3 4-3.500V16z" fill="#fff" stroke="none" /></svg>
      <svg width="22" height="18" viewBox="0 0 22 18" className="ml-[10px]" fill="none" stroke="#fff" strokeWidth="1.200"><path d="M1 6h3.500l5-4.500v15L4.500 12H1zM12 6.500q2 2.500 0 5M15 4q3.500 5 0 10M18 1.500q5 7.500 0 15" /></svg>
      <Fit w={29} className={t + " ml-[12px] text-[15px]"}>ENG</Fit>
      <div className="ml-[16px] flex w-[76px] flex-col items-center leading-[23px]">
        <Fit w={35} className={t + " text-[14.500px]"}>01:25</Fit>
        <Fit w={75} className={t + " text-[14.500px]"}>15-04-2023</Fit>
      </div>
      <svg width="36" height="34" viewBox="0 0 36 34" className="mt-1 mr-[16px] ml-[22px]"><path d="M1 2h20v17h-7l-4 4v-4H1z" fill="#fff" /><path d="M5 7h12M5 11h12M5 15h8" stroke="#1b2742" strokeWidth="1.200" /><circle cx="20" cy="22" r="10" fill="#2d3238" stroke="#8e9297" /><text x="20" y="27.500" textAnchor="middle" fontSize="14" fontWeight="600" fill="#fff" className="font-['Noto_Sans',sans-serif]">11</text></svg>
    </footer>
  );
}

export default function App() {
  return (
    <div className="flex h-[1080px] w-[1920px] flex-col overflow-hidden bg-white">
      <TabStrip />
      <div className="flex min-h-0 flex-1">
        <div className="flex w-[1850px] flex-col">
          <Toolbar />
          <div className="h-px w-full bg-[#b5b5b5]" />
          <div className="flex min-h-0 flex-1">
            <StoryPage />
            <ScrollBar />
          </div>
        </div>
        <Sidebar />
      </div>
      <Taskbar />
    </div>
  );
}
